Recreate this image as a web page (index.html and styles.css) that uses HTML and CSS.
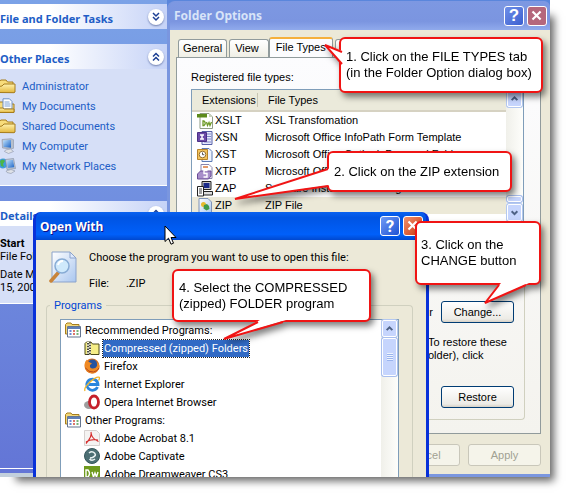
FILE: index.html
```html
<!DOCTYPE html>
<html lang="en">
<head>
  <meta charset="UTF-8">
  <meta name="viewport" content="width=device-width, initial-scale=1.0">
  <title>Folder Options</title>
  <link rel="stylesheet" href="styles.css">
</head>
<body>
  <!-- shared icons -->
  <svg class="defs" width="0" height="0">
    <defs>
      <linearGradient id="gFolder" x1="0" y1="0" x2="0" y2="1">
        <stop offset="0" stop-color="#fff3b0"/><stop offset="1" stop-color="#e3b63c"/>
      </linearGradient>
      <linearGradient id="gScreen" x1="0" y1="0" x2="1" y2="1">
        <stop offset="0" stop-color="#bfe3ff"/><stop offset="1" stop-color="#1c62c4"/>
      </linearGradient>
      <linearGradient id="gPage" x1="0" y1="0" x2="1" y2="1">
        <stop offset="0" stop-color="#ffffff"/><stop offset="1" stop-color="#a9c6ef"/>
      </linearGradient>
    </defs>
    <symbol id="folder" viewBox="0 0 16 16">
      <path d="M-1 13V3.500L1 2h5l1.500 2H13v10z" fill="#f7dc7c" stroke="#a67c1c"/>
      <path d="M-1 14.500V8.500L2 8l2-2h11v8l-1 .7z" fill="url(#gFolder)" stroke="#a67c1c"/>
    </symbol>
    <symbol id="docs" viewBox="0 0 16 16">
      <path d="M-1 14V5l1-1h4l1 2h9v8z" fill="#f7dc7c" stroke="#a67c1c"/>
      <path d="M3 .8h6.500L12 3.500V11H3z" fill="#fff" stroke="#6c8fc7"/>
      <path d="M4.500 4h5M4.500 6h6M4.500 8h6" stroke="#7ba2d8"/>
      <path d="M-1 14.500V10h4l1.500 1H14v3.500z" fill="url(#gFolder)" stroke="#a67c1c"/>
    </symbol>
    <symbol id="computer" viewBox="0 0 16 16">
      <path d="M2 1.500l9-.8 2.500 1v8.600L11 11 2.500 10z" fill="#b7bfcc" stroke="#8b94a8" stroke-width=".6"/>
      <path d="M3 2.500l8-.7v8L3.500 9z" fill="url(#gScreen)"/>
      <path d="M5.500 12l5-1 3 2.500-5 2-4-2z" fill="#dfe2e8" stroke="#8b94a8" stroke-width=".6"/>
    </symbol>
    <symbol id="network" viewBox="0 0 16 16">
      <circle cx="3" cy="5.500" r="5" fill="#3f9be0"/>
      <path d="M0 3q3-3 5 0l-2 3 1 3-3-1z" fill="#4cb648"/>
      <path d="M5.500 1.500l8-1 2 10-8.500 1z" fill="#c3cad6" stroke="#7f899c" stroke-width=".6"/>
      <path d="M6.500 2.500l6.500-.8 1.300 7.500-6.500.8z" fill="url(#gScreen)"/>
      <path d="M6 13l5-1.500 4 1.500-4 2.500-4-1z" fill="#dfe2e8" stroke="#8b94a8" stroke-width=".6"/>
    </symbol>
    <symbol id="dw" viewBox="0 0 16 16">
      <path d="M3 .5h9l3.500 3.500v11.500H3z" fill="#fff" stroke="#8f9c86"/>
      <path d="M0 1h10v3.500H0z" fill="#5d8a1c"/>
      <path d="M12 .5v3.500h3.500z" fill="#c9d4bb"/>
      <path d="M6 8v4.500h1q2.500-2.200 0-4.500zM9.500 9l1 3.500L12 9.500l1 3L14.500 9" fill="none" stroke="#6d9a26" stroke-width="1.300"/>
    </symbol>
    <symbol id="infopath" viewBox="0 0 16 16">
      <path d="M5 1.500h10v13H5z" fill="#e7e9fb" stroke="#5660a8"/>
      <path d="M10 4h4M10 6.500h4M10 9h4M7 12h7" stroke="#7c86c8"/>
      <path d="M.5 2.500h9v9h-9z" fill="#6b4aa8" stroke="#4b2f86"/>
      <path d="M3 5h4M5 5v4M3 9h4" stroke="#fff" stroke-width="1.500"/>
    </symbol>
    <symbol id="outlook" viewBox="0 0 16 16">
      <path d="M5 1.500h7l3 3v10H5z" fill="#eef3fc" stroke="#5d7bb5"/>
      <path d="M.5 2.500h10v10h-10z" fill="#f4c45c" stroke="#b7832a"/>
      <circle cx="5.500" cy="7.500" r="3.300" fill="#fff" stroke="#97702a"/>
      <path d="M5.500 5.500v2.200h1.800" fill="none" stroke="#555"/>
    </symbol>
    <symbol id="xtp" viewBox="0 0 16 16">
      <path d="M4 .5h8l3 3v11H4z" fill="#fff" stroke="#8a86ac"/>
      <path d="M6 3h5" stroke="#e39a6a" stroke-width="2"/>
      <path d="M.5 10l3-3H14v5l-2.500 3H.5z" fill="#a88fca" stroke="#6b4c97"/>
      <path d="M10.500 6.500H7V9.500h3v3.500H6.500" fill="none" stroke="#fff" stroke-width="1.400"/>
    </symbol>
    <symbol id="zap" viewBox="0 0 16 16">
      <path d="M5 .5h9v8H5z" fill="#c9c9c9" stroke="#222"/>
      <path d="M6.500 2h6v5h-6z" fill="#1a2a88"/>
      <path d="M6 10.500h9.500v3.500H6z" fill="#ddd" stroke="#222"/>
      <path d="M.5 5.500h6v9.500h-6z" fill="#fff" stroke="#222"/>
      <path d="M2 8h3M2 10h3M2 12h3" stroke="#444"/>
    </symbol>
    <symbol id="zipfile" viewBox="0 0 16 16">
      <path d="M2 .5h9l3.500 3.500v11.500H2z" fill="url(#gPage)" stroke="#7f93b8"/>
      <circle cx="6.500" cy="6.500" r="2.500" fill="#e6bb2e"/>
      <path d="M7 7l3-1 2 2 .5 3-3 1.500-3-2z" fill="#3f9a4b"/>
    </symbol>
    <symbol id="progs" viewBox="0 0 16 16">
      <path d="M.5 12V2.500L2 1h4l1 1.500h7V12z" fill="#f3d877" stroke="#a67c1c"/>
      <path d="M2.500 4.500h13v10.500h-13z" fill="#fff" stroke="#65758f"/>
      <path d="M3 5h12v2H3z" fill="#5f7fb6"/>
      <path d="M4.500 9h2M4.500 12h2" stroke="#3c62c9" stroke-width="1.600"/>
      <path d="M8 9h2M8 12h2" stroke="#d1493b" stroke-width="1.600"/>
      <path d="M11.500 9h2M11.500 12h2" stroke="#4a9c4a" stroke-width="1.600"/>
    </symbol>
    <symbol id="zipfolder" viewBox="0 0 16 16">
      <path d="M1 14.500V3.500L2.500 2H7l1.500 2H15v10.500z" fill="#f6ee86" stroke="#4d4a1a"/>
      <path d="M3 2h4v12.500H3z" fill="#fffde0"/>
      <path d="M4 3v12M6 2v12" stroke="#111" stroke-width="1.500" stroke-dasharray="1.500 1.200"/>
    </symbol>
    <symbol id="firefox" viewBox="0 0 16 16">
      <circle cx="8" cy="8" r="7.500" fill="#d9701c"/>
      <circle cx="8.500" cy="6.500" r="5" fill="#27539f"/>
      <path d="M.6 6Q1 3 3 1.500q.2 2 2 2.500l3 1.500-2 1.500q-.5 3 2 3.500 3.500.5 5-2.500.6-2-.5-4Q16 6 15.400 10 13 15.500 8 15.500 1 14.500.6 6z" fill="#f08a24"/>
      <path d="M1.500 10q3 4.500 8 4 4-.8 5.500-4" fill="none" stroke="#b5461a"/>
    </symbol>
    <symbol id="ie" viewBox="0 0 16 16">
      <path d="M13.500 11A5.600 5.600 0 1 1 14 8.500H4.500" fill="none" stroke="#2b86dd" stroke-width="2.800"/>
      <path d="M1 15Q-.5 12 6 6t9.300-4.700q.7 1-.8 3.200" fill="none" stroke="#f0b62c" stroke-width="1.300"/>
    </symbol>
    <symbol id="opera" viewBox="0 0 16 16">
      <ellipse cx="5" cy="11" rx="5" ry="4" fill="#9d9d9d"/>
      <ellipse cx="10" cy="8" rx="4.500" ry="6" fill="#fff" stroke="#c5202b" stroke-width="2.800"/>
    </symbol>
    <symbol id="acrobat" viewBox="0 0 16 16">
      <path d="M.5.500h12l3 3v12H.5z" fill="#f5f3f2" stroke="#d6d1cf"/>
      <path d="M7 2q1.500 4-5 11.500M7 3q1 6 7.500 8.500M2 12q5-3.500 12-2" fill="none" stroke="#d52b2b" stroke-width="1.200"/>
    </symbol>
    <symbol id="captivate" viewBox="0 0 16 16">
      <circle cx="8" cy="8" r="7.500" fill="#4c6f74" stroke="#35575c"/>
      <path d="M5 5Q8 2.500 10.500 5T8.500 9.500L6 10M11 11Q8 13.500 5.500 11" fill="none" stroke="#e9f2f2" stroke-width="1.600"/>
    </symbol>
    <symbol id="dwapp" viewBox="0 0 16 16">
      <path d="M0 0h16v16H0z" fill="#6f9a1e"/>
      <path d="M2 4v7h2q3-3.500 0-7zM8 6l1.500 5L11 7l1.500 4L14 6" fill="none" stroke="#fff" stroke-width="1.400"/>
    </symbol>
  </svg>

  <div class="desktop">
    <aside class="tasks">
      <section>
        <h2 class="tasks-head">File and Folder Tasks
          <button class="chevron" aria-label="Expand"><svg viewBox="0 0 16 16"><path d="M5 4l3 3 3-3M5 8l3 3 3-3"/></svg></button>
        </h2>
      </section>
      <section>
        <h2 class="tasks-head">Other Places
          <button class="chevron" aria-label="Collapse"><svg viewBox="0 0 16 16"><path d="M5 7.500l3-3 3 3M5 11.500l3-3 3 3"/></svg></button>
        </h2>
        <ul class="places">
          <li><a href="#"><svg><use href="#folder"/></svg>Administrator</a></li>
          <li><a href="#"><svg><use href="#docs"/></svg>My Documents</a></li>
          <li><a href="#"><svg><use href="#folder"/></svg>Shared Documents</a></li>
          <li><a href="#"><svg><use href="#computer"/></svg>My Computer</a></li>
          <li><a href="#"><svg><use href="#network"/></svg>My Network Places</a></li>
        </ul>
      </section>
      <section>
        <h2 class="tasks-head">Details
          <button class="chevron" aria-label="Collapse"><svg viewBox="0 0 16 16"><path d="M5 7.500l3-3 3 3M5 11.500l3-3 3 3"/></svg></button>
        </h2>
        <div class="details">
          <p><b>Start</b><br>File Fol</p>
          <p>Date M<br>15, 200</p>
        </div>
      </section>
      <div class="statusbar"></div>
    </aside>

    <div class="window options">
      <header class="titlebar">
        <h1>Folder Options</h1>
        <button class="tb-btn" aria-label="Help">?</button>
        <button class="tb-btn close" aria-label="Close"><svg viewBox="0 0 20 20"><path d="M5 5l9 9M14 5l-9 9"/></svg></button>
      </header>
      <div class="options-body">
        <nav class="tabs">
          <button class="tab">General</button>
          <button class="tab view">View</button>
          <button class="tab active">File Types</button>
          <button class="tab">Offline Files</button>
        </nav>
        <div class="panel">
          <p class="label">Registered file types:</p>
          <div class="listview">
            <table class="types">
              <thead>
                <tr><th class="col-ext">Extensions</th><th>File Types</th></tr>
              </thead>
              <tbody>
                <tr><td><svg><use href="#dw"/></svg>XSLT</td><td>XSL Transfomation</td></tr>
                <tr><td><svg><use href="#infopath"/></svg>XSN</td><td>Microsoft Office InfoPath Form Template</td></tr>
                <tr><td><svg><use href="#outlook"/></svg>XST</td><td>Microsoft Office Outlook Personal Folders</td></tr>
                <tr><td><svg><use href="#xtp"/></svg>XTP</td><td>Microsoft Office InfoPath</td></tr>
                <tr><td><svg><use href="#zap"/></svg>ZAP</td><td>Software Installation Settings</td></tr>
                <tr class="selected"><td><svg><use href="#zipfile"/></svg>ZIP</td><td>ZIP File</td></tr>
              </tbody>
            </table>
            <div class="scroll">
              <button class="sb-btn" aria-label="Up"><svg viewBox="0 0 16 16"><path d="M4.500 10L8 6.500l3.500 3.500"/></svg></button>
              <span class="sb-thumb low"></span>
              <button class="sb-btn" aria-label="Down"><svg viewBox="0 0 16 16"><path d="M4.500 6.500L8 10l3.500-3.500"/></svg></button>
            </div>
          </div>
          <div class="group">
            <div class="group-row"><span>r</span><button class="btn">Change...</button></div>
            <p>To restore these<br>older), click</p>
            <div class="group-row"><button class="btn">Restore</button></div>
          </div>
        </div>
        <footer class="actions">
          <button class="btn" disabled>Cancel</button>
          <button class="btn" disabled>Apply</button>
        </footer>
      </div>
    </div>

    <div class="window openwith">
      <header class="titlebar">
        <h1>Open With</h1>
        <button class="tb-btn" aria-label="Help">?</button>
        <button class="tb-btn close" aria-label="Close"><svg viewBox="0 0 20 20"><path d="M5 5l9 9M14 5l-9 9"/></svg></button>
      </header>
      <div class="openwith-body">
        <div class="intro">
          <svg class="search" viewBox="0 0 28 32">
            <path d="M3 1h18l6 6v24H3z" fill="url(#gPage)" stroke="#8ba3cc"/>
            <path d="M21 1v6h6z" fill="#dfeafc" stroke="#8ba3cc"/>
            <path d="M2 30l7-8" stroke="#c8843a" stroke-width="3.500" stroke-linecap="round"/>
            <circle cx="13" cy="15" r="7" fill="#cfe9fb" stroke="#87abd4" stroke-width="1.500"/>
            <path d="M9 14q1-4 5-4" fill="none" stroke="#fff" stroke-width="2"/>
          </svg>
          <div>
            <p>Choose the program you want to use to open this file:</p>
            <p class="file"><span>File:</span><span>.ZIP</span></p>
          </div>
        </div>
        <fieldset>
          <legend>Programs</legend>
          <div class="proglist">
            <ul>
              <li><svg><use href="#progs"/></svg><span>Recommended Programs:</span></li>
              <li class="sub selected"><svg><use href="#zipfolder"/></svg><span>Compressed (zipped) Folders</span></li>
              <li class="sub"><svg><use href="#firefox"/></svg><span>Firefox</span></li>
              <li class="sub"><svg><use href="#ie"/></svg><span>Internet Explorer</span></li>
              <li class="sub"><svg><use href="#opera"/></svg><span>Opera Internet Browser</span></li>
              <li><svg><use href="#progs"/></svg><span>Other Programs:</span></li>
              <li class="sub"><svg><use href="#acrobat"/></svg><span>Adobe Acrobat 8.1</span></li>
              <li class="sub"><svg><use href="#captivate"/></svg><span>Adobe Captivate</span></li>
              <li class="sub"><svg><use href="#dwapp"/></svg><span>Adobe Dreamweaver CS3</span></li>
            </ul>
            <div class="scroll">
              <button class="sb-btn" aria-label="Up"><svg viewBox="0 0 16 16"><path d="M4.500 10L8 6.500l3.500 3.500"/></svg></button>
              <span class="sb-thumb"><i></i></span>
            </div>
          </div>
        </fieldset>
      </div>
    </div>

    <div class="callout c1">1. Click on the FILE TYPES tab<br>(in the Folder Option dialog box)
      <svg class="tail" width="20" height="30" viewBox="0 0 20 30"><path class="fill" d="M20 11L2 5l18 20z"/><path d="M19 12L2 5l17 19"/></svg>
    </div>
    <div class="callout c2">2. Click on the ZIP extension
      <svg class="tail" width="98" height="36" viewBox="0 0 98 36"><path class="fill" d="M98 2L2 33l96-14z"/><path d="M95 3L2 33l93-13"/></svg>
    </div>
    <div class="callout c3">3. Click on the<br>CHANGE button
      <svg class="tail" width="48" height="22" viewBox="0 0 48 22"><path class="fill" d="M18 0L2 20 46 0z"/><path d="M16 2L2 20 43 2"/></svg>
    </div>
    <div class="callout c4">4. Select the COMPRESSED<br>(zipped) FOLDER program
      <svg class="tail" width="66" height="22" viewBox="0 0 66 22"><path class="fill" d="M38 0L2 19 64 0z"/><path d="M36 2L2 19 61 2"/></svg>
    </div>

    <svg class="cursor" width="13" height="21" viewBox="0 0 13 21"><path d="M1 1v15.500l3.500-3.300 2.500 6 2.500-1-2.500-5.700h5z" fill="#fff" stroke="#000"/></svg>
  </div>
</body>
</html>
```
FILE: styles.css
```css
* {
  box-sizing: border-box;
}
body {
  margin: 0;
  background: #fff;
  font-family: Roboto, "Open Sans", sans-serif;
  font-size: 11px;
  line-height: 13px;
  color: #000;
}
h1, h2, p, ul {
  margin: 0;
  padding: 0;
  list-style: none;
}
button {
  font: inherit;
  padding: 0;
}
svg {
  display: block;
  flex: none;
}
.defs {
  position: absolute;
}
.desktop {
  position: relative;
  height: calc(100vh - 16px);
  margin-right: 16px;
  overflow: hidden;
  background: #5a86dc;
}
body::before {
  content: "";
  position: absolute;
  inset: 12px 16px 16px 12px;
  box-shadow: 4px 4px 8px rgba(0,0,0,0.6);
}

/* explorer task pane */
.tasks {
  width: 167px;
  height: 100%;
  display: flex;
  flex-direction: column;
  gap: 15px;
  padding-top: 4px;
  background: linear-gradient(#7ba2e7, #6375d6);
}
.tasks-head {
  display: flex;
  align-items: center;
  justify-content: space-between;
  height: 25px;
  padding: 3px 3px 0 0;
  font-family: "Noto Sans", "Open Sans", sans-serif;
  font-size: 11px;
  font-weight: bold;
  white-space: nowrap;
  color: #215dc6;
  background: linear-gradient(90deg, #fff 30%, #c6d3f7);
}
.chevron {
  width: 16px;
  height: 16px;
  margin-bottom: 3px;
  border: none;
  border-radius: 50%;
  background: #fff;
  box-shadow: 0 1px 2px #7080b0;
}
.chevron path {
  fill: none;
  stroke: #1c3f94;
  stroke-width: 1.5;
}
.places {
  display: flex;
  flex-direction: column;
  gap: 4px;
  height: 117px;
  padding-top: 9px;
  background: #d6dff7;
  border-bottom: 1px solid #fff;
}
.places a {
  display: flex;
  align-items: center;
  gap: 6px;
  color: #215dc6;
  text-decoration: none;
}
.places svg {
  width: 16px;
  height: 16px;
}
.details {
  height: 78px;
  padding-top: 11px;
  background: #d6dff7;
  border-bottom: 1px solid #fff;
}
.details p + p {
  margin-top: 5px;
}
.statusbar {
  height: 9px;
  margin-top: auto;
  border-top: 1px solid #fff;
  border-bottom: 4px solid #c3d0dc;
  background: #6375d6;
}

/* windows */
.window {
  position: absolute;
  display: flex;
  flex-direction: column;
  border-radius: 8px 8px 0 0;
}
.titlebar {
  display: flex;
  align-items: center;
  gap: 3px;
  padding: 0 3px 0 4px;
  border-radius: 6px 6px 0 0;
}
.titlebar h1 {
  flex: 1;
  font-family: "Noto Sans", "Open Sans", sans-serif;
  font-size: 12px;
  font-weight: bold;
}
.tb-btn {
  width: 20px;
  height: 20px;
  border: 1px solid #fff;
  border-radius: 3px;
  font-size: 17px;
  font-weight: bold;
  color: #fff;
  background: linear-gradient(135deg, #6f9bf5, #1f52d4);
}
.tb-btn.close {
  background: linear-gradient(135deg, #f0906c, #cf3a10);
}
.tb-btn path {
  fill: none;
  stroke: #fff;
  stroke-width: 2.4;
}
.btn {
  width: 73px;
  height: 22px;
  border: 1px solid #003c74;
  border-radius: 3px;
  background: linear-gradient(#fff, #ecebe6 85%, #d6d0c5);
  color: #000;
}
.btn:disabled {
  border-color: #c9c7ba;
  background: #f5f4ea;
  color: #a1a192;
}

/* scrollbars */
.scroll {
  width: 17px;
  display: flex;
  flex-direction: column;
  align-items: center;
  background: linear-gradient(90deg, #f0f0ea, #fefefb);
}
.sb-btn {
  width: 15px;
  height: 17px;
  border: 1px solid #fff;
  border-radius: 2px;
  background: #c6d5fd;
  box-shadow: 0 0 0 1px #b4c8f0;
}
.sb-btn path {
  fill: none;
  stroke: #4d6185;
  stroke-width: 2.4;
}
.sb-thumb {
  display: flex;
  align-items: center;
  justify-content: center;
  width: 15px;
  height: 38px;
  margin-top: 1px;
  border: 1px solid #fff;
  border-radius: 2px;
  background: #c6d5fd;
  box-shadow: 0 0 0 1px #a9bfee;
}
.sb-thumb i {
  width: 6px;
  height: 8px;
  background: repeating-linear-gradient(#eef4fe 0 1px, #9ab4ee 1px 2px);
}
.sb-thumb.low {
  height: 6px;
  margin: auto 0 2px;
}

/* folder options */
.options {
  top: 1px;
  left: 167px;
  right: 0;
  bottom: 0;
  font-family: "Liberation Sans", Arial, sans-serif;
  background: #7a96df;
  padding: 0 0 3px 3px;
}
.options .titlebar {
  height: 29px;
  color: #d8e4f8;
  background: linear-gradient(#7d98e2, #7b95e0 70%, #90aaec);
}
.options .tb-btn {
  background: linear-gradient(135deg, #6f8fe8, #3a5fd0);
}
.options .tb-btn.close {
  background: #b5677c;
}
.options-body {
  flex: 1;
  display: flex;
  flex-direction: column;
  padding: 7px 9px 8px 6px;
  background: #ece9d8;
}
.tabs {
  display: flex;
  align-items: flex-end;
  height: 20px;
  padding-left: 2px;
}
.tab {
  height: 18px;
  padding: 0 4px;
  margin-right: 2px;
  border: 1px solid #919b9c;
  border-bottom: none;
  border-radius: 3px 3px 0 0;
  background: linear-gradient(#fff, #f0efe6);
}
.tab.view {
  padding: 0 9px 0 5px;
}
.tab.active {
  height: 20px;
  margin-left: -2px;
  padding: 0 6px 2px;
  border-top: 2px solid #f5b03c;
  background: #fcfcfe;
}
.panel {
  flex: 1;
  display: flex;
  flex-direction: column;
  padding: 13px 16px 13px 14px;
  border: 1px solid #919b9c;
  background: linear-gradient(#fcfcfe, #f4f3ee);
}
.listview {
  display: flex;
  height: 133px;
  margin-top: 5px;
  border: 1px solid #7f9db9;
  background: #fff;
}
.types {
  flex: 1;
  align-self: flex-start;
  table-layout: fixed;
  border-collapse: collapse;
  white-space: nowrap;
}
.types th {
  height: 21px;
  padding: 0 0 0 10px;
  text-align: left;
  font-weight: normal;
  background: #ebeadb;
  border-bottom: 2px solid #d6d2c2;
}
.types .col-ext {
  width: 66px;
  background: linear-gradient(#c7c5b2, #c7c5b2) right center / 1px 14px no-repeat #ebeadb;
}
.types td {
  height: 17px;
  padding: 0 0 0 7px;
}
.types td:first-child {
  display: flex;
  align-items: center;
  gap: 2px;
  padding-left: 5px;
}
.types td svg {
  width: 16px;
  height: 16px;
}
.types .selected {
  background: #ece9d8;
}
.group {
  flex: 1;
  display: flex;
  flex-direction: column;
  padding: 0 10px 11px 0;
  border: 1px solid #d0d0bf;
  border-top: none;
  border-radius: 4px;
  margin-right: -1px;
}
.group-row {
  display: flex;
  align-items: center;
  justify-content: flex-end;
  gap: 8px;
}
.group .group-row:first-child {
  margin-top: 79px;
}
.group p {
  margin: 13px 0 auto;
  padding-left: 236px;
}
.actions {
  display: flex;
  justify-content: flex-end;
  gap: 8px;
  padding-top: 10px;
}

/* open with */
.openwith {
  top: 212px;
  left: 33px;
  width: 396px;
  bottom: 0;
  background: #0831d9;
  padding: 0 3px;
}
.openwith .titlebar {
  height: 28px;
  color: #fff;
  text-shadow: 1px 1px #0f1089;
  background: linear-gradient(#0a62f0, #0054e3 20%, #0060fa 80%, #0048cf);
}
.openwith-body {
  flex: 1;
  min-height: 0;
  padding: 11px 13px 0 10px;
  background: #ece9d8;
}
.intro {
  display: flex;
  gap: 12px;
  padding-left: 3px;
}
.search {
  width: 28px;
  height: 32px;
}
.file {
  display: flex;
  gap: 17px;
  margin-top: 13px;
}
fieldset {
  margin: 9px 0 0;
  padding: 7px 13px 0;
  border: 1px solid #d0d0bf;
  border-bottom: none;
  border-radius: 4px 4px 0 0;
  min-width: 0;
}
legend {
  padding: 0 4px;
  margin-left: -10px;
  color: #0046d5;
}
.proglist {
  display: flex;
  justify-content: space-between;
  height: 190px;
  border: 1px solid #7f9db9;
  background: #fff;
}
.proglist ul {
  padding: 1px 0 0 4px;
}
.proglist li {
  display: flex;
  align-items: center;
  gap: 3px;
  height: 18px;
  white-space: nowrap;
}
.proglist li svg {
  width: 16px;
  height: 16px;
}
.proglist li.sub {
  padding-left: 19px;
}
.proglist li span {
  padding: 2px 1px;
}
.proglist .selected span {
  color: #fff;
  background: #316ac5;
  outline: 1px dotted #222;
}

/* callouts */
.callout {
  position: absolute;
  display: flex;
  align-items: center;
  padding: 0 6px 0 5px;
  border: 2px solid #f01414;
  border-radius: 6px;
  background: #fff;
  font-family: "Liberation Sans", Arial, sans-serif;
  font-size: 13px;
  line-height: 16px;
  white-space: nowrap;
  filter: drop-shadow(3px 4px 3px rgba(0,0,0,0.5));
}
.tail {
  position: absolute;
}
.tail path {
  fill: none;
  stroke: #f01414;
  stroke-width: 2;
}
.tail .fill {
  fill: #fff;
  stroke: none;
}
.c1 {
  top: 37px;
  left: 339px;
  width: 204px;
  height: 56px;
}
.c1 .tail {
  left: -18px;
  top: 1px;
}
.c2 {
  top: 151px;
  left: 327px;
  width: 185px;
  height: 41px;
}
.c2 .tail {
  left: -96px;
  top: 13px;
}
.c3 {
  top: 221px;
  left: 415px;
  width: 126px;
  height: 64px;
  padding-left: 4px;
}
.c3 .tail {
  left: 66px;
  top: 60px;
}
.c4 {
  top: 269px;
  left: 172px;
  width: 199px;
  height: 53px;
}
.c4 .tail {
  left: 48px;
  top: 49px;
}
.cursor {
  position: absolute;
  left: 164px;
  top: 225px;
}
```
